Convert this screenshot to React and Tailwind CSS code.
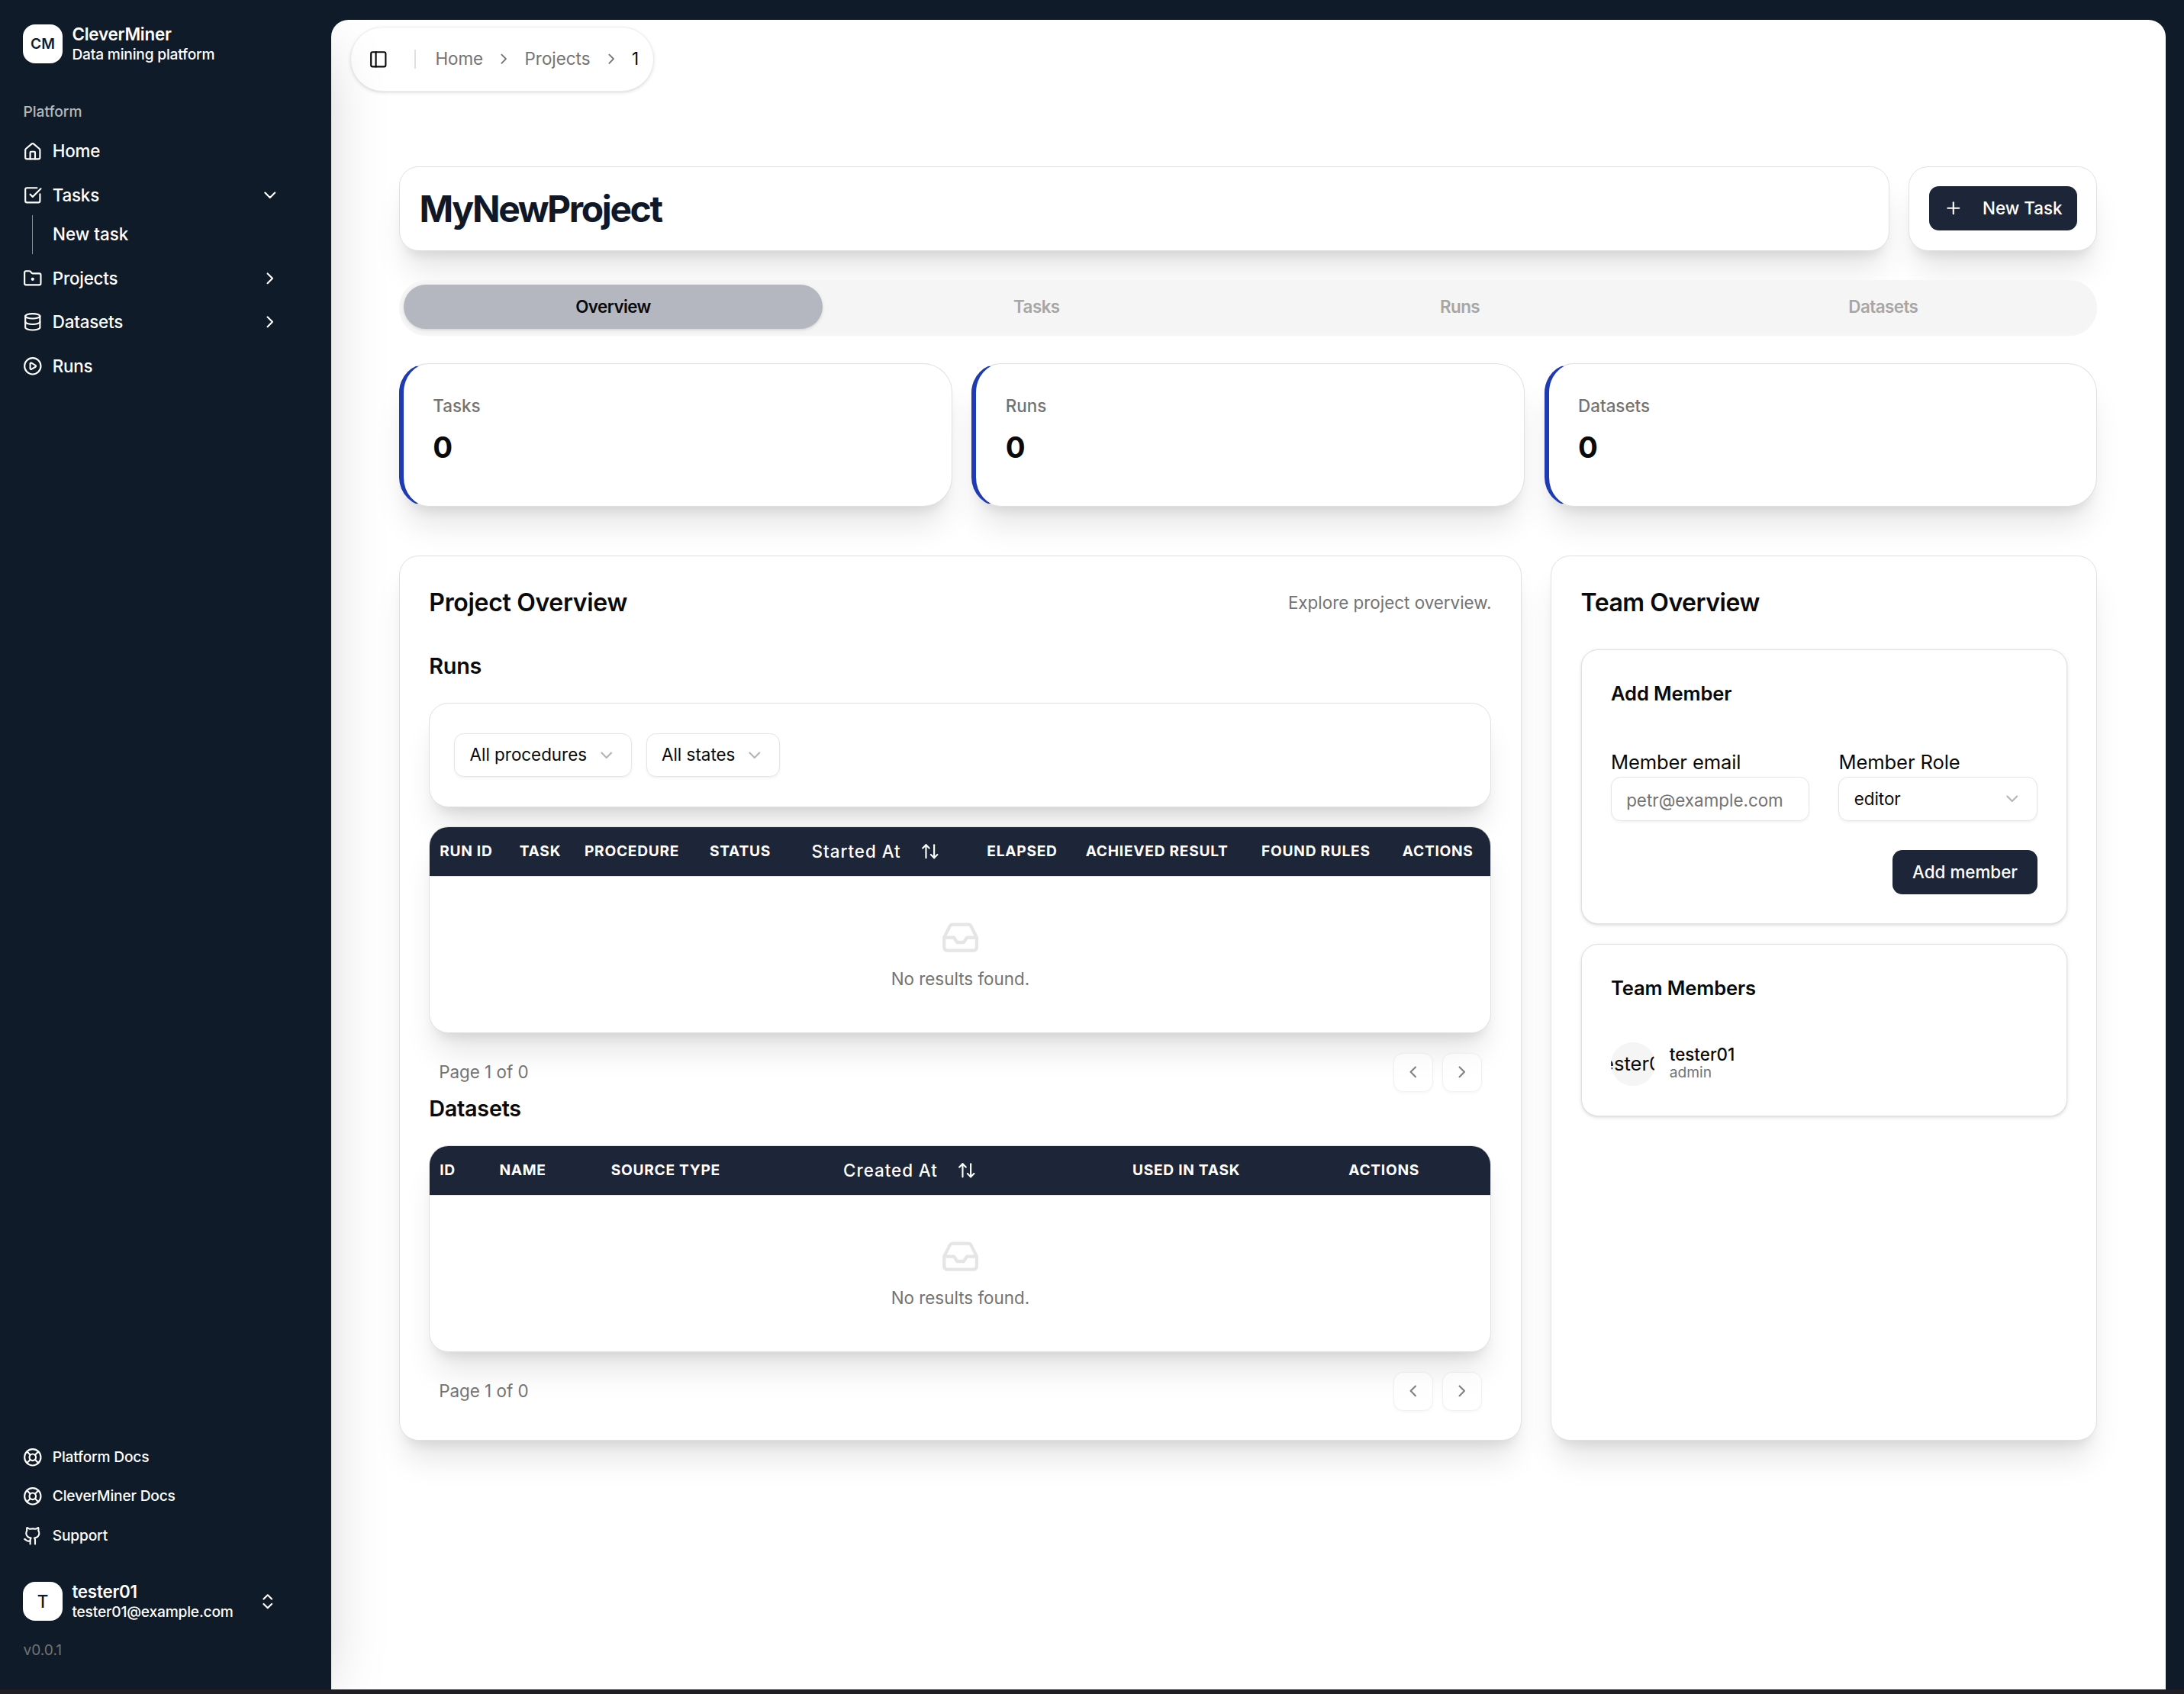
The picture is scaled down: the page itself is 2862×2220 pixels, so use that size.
import {
  ArrowUpDown,
  ChevronDown,
  ChevronLeft,
  ChevronRight,
  ChevronsUpDown,
  CirclePlay,
  Database,
  FolderDot,
  Github,
  House,
  Inbox,
  LifeBuoy,
  PanelLeft,
  Plus,
  SquareCheckBig,
} from "lucide-react";
import clsx from "clsx";

const NAV_SECONDARY = [
  { title: "Platform Docs", icon: LifeBuoy },
  { title: "CleverMiner Docs", icon: LifeBuoy },
  { title: "Support", icon: Github },
];

const TABS = ["Overview", "Tasks", "Runs", "Datasets"];

const STATS = [
  { label: "Tasks", value: 0 },
  { label: "Runs", value: 0 },
  { label: "Datasets", value: 0 },
];

const RUN_COLUMNS = [
  { title: "Run ID", width: "w-[65.4px]" },
  { title: "Task", width: "w-[53.2px]" },
  { title: "Procedure", width: "w-[102.5px]" },
  { title: "Status", width: "w-[71.5px]" },
  { title: "Started At", width: "w-[155.5px]", sortable: true },
  { title: "Elapsed", width: "w-[80.8px]" },
  { title: "Achieved Result", width: "w-[144px]" },
  { title: "Found Rules", width: "w-[115.4px]" },
  { title: "Actions", width: "w-[80.2px]" },
];

const DATASET_COLUMNS = [
  { title: "ID", width: "w-[48.9px]" },
  { title: "Name", width: "w-[91.4px]" },
  { title: "Source Type", width: "w-[178.2px]" },
  { title: "Created At", width: "w-[248.7px]", sortable: true },
  { title: "Used in Task", width: "w-[177px]" },
  { title: "Actions", width: "w-[124.3px]" },
];

function NavItem({ icon: Icon, title, chevron: Chevron }) {
  return (
    <button className="flex h-8 w-full items-center gap-2 px-2 text-sm font-medium tracking-[-0.01em]">
      <Icon className="size-4 shrink-0" />
      <span>{title}</span>
      {Chevron && <Chevron className="ml-auto size-4" />}
    </button>
  );
}

function Sidebar() {
  return (
    <aside className="flex w-[271.25px] shrink-0 flex-col pt-3 pb-6 pl-[11px] text-white">
      {/* Brand */}
      <div className="flex h-12 items-center gap-2 px-2">
        <div className="flex size-8 items-center justify-center rounded-[10px] bg-white text-xs font-semibold text-[#0f1b28]">
          CM
        </div>
        <div className="grid text-left">
          <span className="text-sm leading-tight font-semibold tracking-[-0.01em]">CleverMiner</span>
          <span className="text-xs font-medium tracking-[-0.01em]">Data mining platform</span>
        </div>
      </div>

      {/* Main navigation */}
      <div className="mt-4 flex w-[226.4px] flex-col">
        <div className="flex h-8 items-center px-2 text-xs font-medium text-white/70">Platform</div>
        <nav className="flex flex-col gap-1">
          <NavItem icon={House} title="Home" />
          <div>
            <NavItem icon={SquareCheckBig} title="Tasks" chevron={ChevronDown} />
            <div className="ml-[15.3px] border-l border-white/50 py-0.5 pl-[16.2px]">
              <button className="flex h-7 items-center text-sm font-medium">New task</button>
            </div>
          </div>
          <NavItem icon={FolderDot} title="Projects" chevron={ChevronRight} />
          <NavItem icon={Database} title="Datasets" chevron={ChevronRight} />
          <NavItem icon={CirclePlay} title="Runs" />
        </nav>
      </div>

      {/* Links */}
      <div className="mt-auto flex flex-col gap-1">
        {NAV_SECONDARY.map(({ title, icon: Icon }) => (
          <button
            key={title}
            className="flex h-7 items-center gap-2 px-2 text-xs font-medium tracking-[-0.01em]"
          >
            <Icon className="size-4 shrink-0" />
            <span>{title}</span>
          </button>
        ))}
      </div>

      {/* User */}
      <button className="mt-4 flex h-12 w-[224.2px] items-center gap-2 px-2 text-left">
        <div className="flex size-8 items-center justify-center rounded-[10px] bg-white text-sm font-medium text-[#0f1b28]">
          T
        </div>
        <div className="grid flex-1">
          <span className="text-sm leading-tight font-semibold tracking-[-0.01em]">tester01</span>
          <span className="text-xs font-medium tracking-[-0.01em]">tester01@example.com</span>
        </div>
        <ChevronsUpDown className="size-4" />
      </button>
      <div className="mt-2 px-2 text-xs text-[#737373]">v0.0.1</div>
    </aside>
  );
}

function Breadcrumbs() {
  return (
    <header className="ml-[15.7px] flex h-[53px] w-[248.8px] items-center rounded-full border border-[#ececec] bg-white pl-2 text-sm shadow-sm">
      <button className="flex size-7 items-center justify-center text-[#0a0a0a]" aria-label="Toggle sidebar">
        <PanelLeft className="size-4" />
      </button>
      <div className="ml-4 h-4 w-[1.25px] bg-[#e0e0e0]" />
      <nav className="ml-[15.7px] flex items-center gap-2.5 text-[#737373]">
        <span>Home</span>
        <ChevronRight className="size-3.5" />
        <span>Projects</span>
        <ChevronRight className="size-3.5" />
        <span className="text-[#0a0a0a]">1</span>
      </nav>
    </header>
  );
}

function StatCard({ label, value }) {
  return (
    <div className="rounded-3xl border border-l-4 border-[#e0e0e0] border-l-[#1f3bb3] bg-white px-6 pt-6 pb-8 shadow-xl">
      <p className="text-sm font-medium text-[#737373]">{label}</p>
      <p className="mt-2 text-2xl font-bold">{value}</p>
    </div>
  );
}

function SelectButton({ children, className }) {
  return (
    <button
      className={clsx(
        "flex h-9 items-center justify-between gap-2 rounded-lg border border-[#e5e5e5] bg-white px-3 text-sm shadow-xs",
        className
      )}
    >
      <span>{children}</span>
      <ChevronDown className="size-4 text-[#b5b5b5]" />
    </button>
  );
}

function DataTable({ columns }) {
  return (
    <>
      <div className="mt-4 overflow-hidden rounded-2xl border border-[#e0e0e0] bg-white shadow-xl">
        <table className="w-full table-fixed border-collapse">
          <thead className="bg-[#1d2538] text-left text-xs text-white">
            <tr className="h-10 border-b border-[#e5e5e5]">
              {columns.map((col) => (
                <th key={col.title} className={clsx("px-2 py-0 whitespace-nowrap", col.width)}>
                  {col.sortable ? (
                    <button className="flex items-center gap-4 px-3 text-sm font-medium tracking-[0.043em]">
                      {col.title}
                      <ArrowUpDown className="size-4" />
                    </button>
                  ) : (
                    <span className="font-bold tracking-[0.037em] uppercase">{col.title}</span>
                  )}
                </th>
              ))}
            </tr>
          </thead>
          <tbody>
            <tr>
              <td colSpan={columns.length} className="h-32 p-0">
                <div className="flex flex-col items-center gap-2 text-sm text-[#737373]">
                  <Inbox className="size-8 text-[#e5e5e5]" />
                  <span>No results found.</span>
                </div>
              </td>
            </tr>
          </tbody>
        </table>
      </div>
      <div className="mt-4 flex items-center justify-between px-2">
        <span className="text-sm text-[#737373]">Page 1 of 0</span>
        <div className="flex gap-2">
          <PageButton icon={ChevronLeft} label="Previous page" />
          <PageButton icon={ChevronRight} label="Next page" />
        </div>
      </div>
    </>
  );
}

function PageButton({ icon: Icon, label }) {
  return (
    <button
      disabled
      aria-label={label}
      className="flex size-8 items-center justify-center rounded-lg border border-[#e5e5e5] bg-white opacity-50 shadow-xs"
    >
      <Icon className="size-4" />
    </button>
  );
}

function ProjectOverview() {
  return (
    <section className="col-span-2 rounded-2xl border border-[#e0e0e0] bg-white p-6 shadow-xl">
      <div className="flex items-center justify-between">
        <h2 className="text-xl font-semibold tracking-[-0.01em]">Project Overview</h2>
        <p className="text-sm text-[#737373]">Explore project overview.</p>
      </div>

      <h3 className="mt-6 text-lg leading-7 font-semibold tracking-[-0.01em]">Runs</h3>
      <div className="mt-4 flex gap-3 rounded-2xl border border-[#e0e0e0] bg-white px-5 py-6 shadow-xl">
        <SelectButton>All procedures</SelectButton>
        <SelectButton>All states</SelectButton>
      </div>
      <DataTable columns={RUN_COLUMNS} />

      <h3 className="text-lg leading-7 font-semibold tracking-[-0.01em]">Datasets</h3>
      <DataTable columns={DATASET_COLUMNS} />
    </section>
  );
}

function TeamOverview() {
  return (
    <section className="rounded-2xl border border-[#e0e0e0] bg-white p-6 shadow-xl">
      <h2 className="text-xl font-semibold tracking-[-0.015em]">Team Overview</h2>

      <div className="mt-6 rounded-[14px] border border-[#e0e0e0] bg-white p-6 shadow-sm">
        <h3 className="font-semibold tracking-[-0.005em]">Add Member</h3>
        <div className="mt-8 grid grid-cols-2 gap-6">
          <div>
            <label className="block tracking-[-0.005em]">Member email</label>
            <input
              type="email"
              placeholder="petr@example.com"
              className="h-9 w-full rounded-lg border border-[#e5e5e5] px-3 pt-0.5 text-sm shadow-xs placeholder:text-[#737373]"
            />
          </div>
          <div>
            <label className="block tracking-[-0.005em]">Member Role</label>
            <SelectButton className="w-full">editor</SelectButton>
          </div>
        </div>
        <div className="mt-6 flex justify-end">
          <button className="h-9 rounded-lg bg-[#1d2538] px-4 text-sm font-medium text-white">Add member</button>
        </div>
      </div>

      <div className="mt-4 rounded-[14px] border border-[#e0e0e0] bg-white p-6 shadow-sm">
        <h3 className="font-semibold tracking-[-0.005em]">Team Members</h3>
        <div className="mt-8 flex items-center gap-3">
          <div className="flex size-9 items-center justify-center overflow-hidden rounded-full bg-[#f5f5f5]">tester01</div>
          <div>
            <p className="text-sm leading-none font-medium">tester01</p>
            <p className="text-xs text-[#737373]">admin</p>
          </div>
        </div>
      </div>
    </section>
  );
}

export default function App() {
  return (
    <div className="h-[1387.5px] w-[1788.75px] overflow-hidden bg-[#1f1e25] font-['Inter',sans-serif] text-[#0a0a0a] [zoom:1.6]">
      <div className="flex h-[1383.75px] overflow-hidden bg-[#0f1b28]">
        <Sidebar />

        <main className="relative mt-[16.25px] mr-[15px] flex-1 overflow-hidden rounded-t-[14px] bg-white pt-[5.6px]">
          {/* Shadow the sidebar throws on the page */}
          <div className="pointer-events-none absolute -top-2 bottom-[18px] -left-64 w-64 shadow-2xl" />
          <Breadcrumbs />

          <div className="mt-[61.3px] pr-[56px] pl-[55.6px]">
            <div className="flex gap-4">
              <div className="flex flex-1 items-center rounded-2xl border border-[#e0e0e0] bg-white px-4 pt-px shadow-xl">
                <h1 className="text-3xl font-bold tracking-tighter text-[#101828]">MyNewProject</h1>
              </div>
              <div className="rounded-2xl border border-[#e0e0e0] bg-white p-4 shadow-xl">
                <button className="flex h-9 items-center gap-4 rounded-lg bg-[#1d2538] px-3 text-sm font-medium text-white">
                  <Plus className="size-4" />
                  New Task
                </button>
              </div>
            </div>

            <div className="relative mt-6 grid h-[45px] grid-cols-4 gap-1 rounded-full bg-[#f5f5f5] p-1 shadow-[0_1px_0_rgba(0,0,0,0.03)]">
              {TABS.map((tab, i) => (
                <button
                  key={tab}
                  className={clsx(
                    "h-9 rounded-full text-sm font-semibold tracking-tight",
                    i === 0 ? "bg-[#b4b7bf] shadow-sm" : "text-[#a6a6a6]"
                  )}
                >
                  {tab}
                </button>
              ))}
            </div>

            <div className="mt-[23.4px] grid grid-cols-3 gap-4">
              {STATS.map((stat) => (
                <StatCard key={stat.label} {...stat} />
              ))}
            </div>

            <div className="mt-[40.2px] grid grid-cols-3 gap-6">
              <ProjectOverview />
              <TeamOverview />
            </div>
          </div>
        </main>
      </div>
    </div>
  );
}
